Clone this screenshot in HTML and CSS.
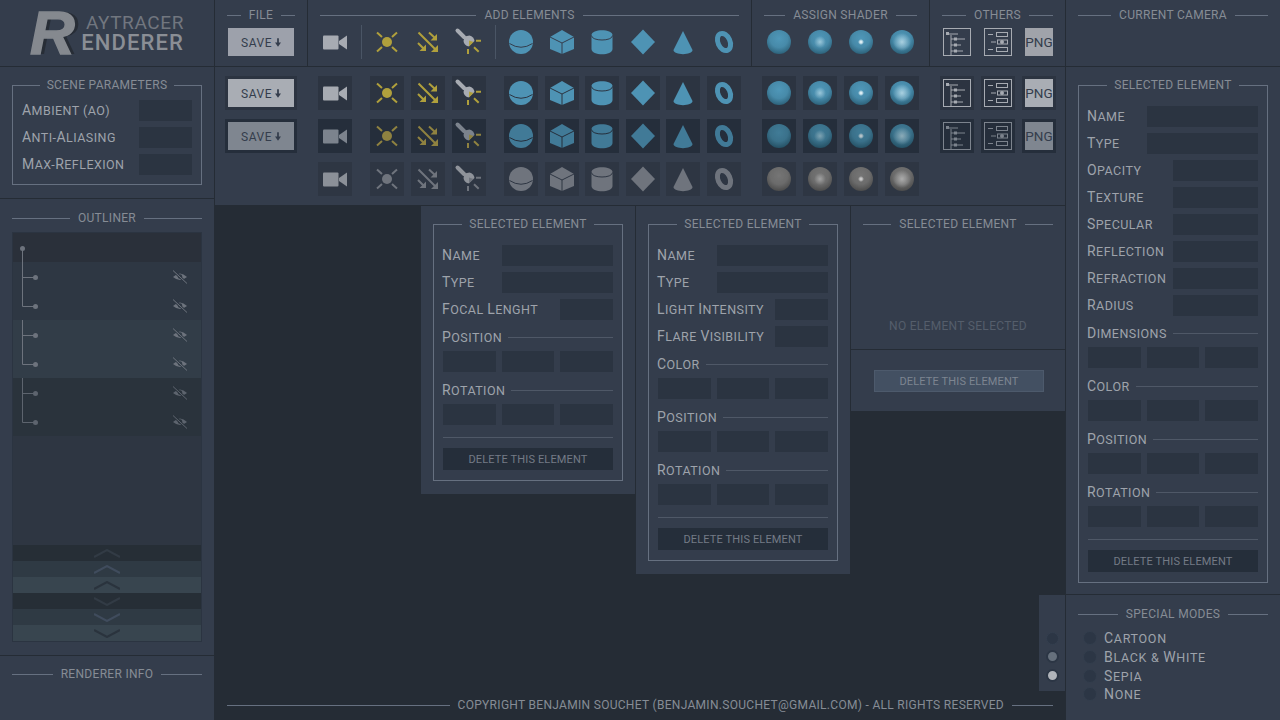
FILE: index.html
```html
<!DOCTYPE html>
<html lang="en">
<head>
    <meta charset="UTF-8">
    <meta name="viewport" content="width=device-width, initial-scale=1.0">
    <title>Raytracer Renderer</title>
    <link rel="stylesheet" href="styles.css">
</head>
<body>
    <!-- icon sheet, all drawn in the 34x34 box of a tool cell -->
    <svg class="sheet" width="0" height="0" aria-hidden="true">
        <symbol id="i-camera" viewBox="0 0 34 34">
            <rect x="5" y="10.5" width="15.5" height="14" rx="1" fill="currentColor"/>
            <polygon points="21,16 29,10.5 29,24.5 21,19" fill="currentColor"/>
        </symbol>
        <symbol id="i-sun" viewBox="0 0 34 34">
            <circle cx="17" cy="17" r="5" fill="currentColor"/>
            <path d="M7 7.5L12 12M27 7.5L22 12M7 26.5L12 22M27 26.5L22 22" stroke="currentColor" stroke-width="2" fill="none"/>
        </symbol>
        <symbol id="i-dir" viewBox="0 0 34 34">
            <path d="M7.5 7.5L25 25M18 7.5L24 13M7 18L13 24" stroke="currentColor" stroke-width="2" fill="none"/>
            <polygon points="27,20 27,27 20,27" fill="currentColor"/>
            <polygon points="26,9 26,15.500 19.500,15.500" fill="currentColor"/>
            <polygon points="15,19.500 15,26 8.500,26" fill="currentColor"/>
        </symbol>
        <symbol id="i-spot" viewBox="0 0 34 34">
            <path d="M5.500 5.500L12 12" stroke-width="4" stroke-linecap="round" class="spot-body-line" fill="none"/>
            <path d="M12.500 11.500L17.500 10.500A6.500 6.500 0 0 1 22.500 16L16.500 21.500A6.500 6.500 0 0 1 11.500 16Z" class="spot-body"/>
            <path d="M17 15.500L21.500 17L17 21.500Z" fill="currentColor"/>
            <path d="M24 15.700H29M16 24V29M22 22.300L26.700 26.700" stroke="currentColor" stroke-width="2" fill="none"/>
        </symbol>
        <symbol id="i-sphere" viewBox="0 0 34 34">
            <circle cx="17" cy="17" r="12" fill="currentColor"/>
            <path d="M5.500 18.500Q17 26 28.500 18.500" stroke="var(--cut)" stroke-width="1" fill="none"/>
        </symbol>
        <symbol id="i-cube" viewBox="0 0 34 34">
            <polygon points="17,5 29,12 29,24 17,29 5,24 5,12" fill="currentColor"/>
            <path d="M5 12L17 18L29 12M17 18V29" stroke="var(--cut)" stroke-width="1" fill="none"/>
        </symbol>
        <symbol id="i-cylinder" viewBox="0 0 34 34">
            <path d="M6.500 10C6.500 3.500 27.500 3.500 27.500 10V24C27.500 31 6.500 31 6.500 24Z" fill="currentColor"/>
            <path d="M6.500 10.500C6.500 16.500 27.500 16.500 27.500 10.500" stroke="var(--cut)" stroke-width="1" fill="none"/>
        </symbol>
        <symbol id="i-diamond" viewBox="0 0 34 34">
            <polygon points="17,4.500 29,17 17,29.500 5,17" fill="currentColor"/>
        </symbol>
        <symbol id="i-cone" viewBox="0 0 34 34">
            <path d="M17 6L26.500 25C26.500 30.500 7.500 30.500 7.500 25Z" fill="currentColor"/>
        </symbol>
        <symbol id="i-torus" viewBox="0 0 34 34">
            <ellipse cx="17" cy="17" rx="6" ry="9" transform="rotate(-24 17 17)" fill="none" stroke="currentColor" stroke-width="5"/>
        </symbol>
        <symbol id="i-tree" viewBox="0 0 34 34">
            <g fill="none" stroke="currentColor">
                <rect x="3.500" y="3.500" width="27" height="27"/>
                <path d="M8 9H18M11 10V30M11 14H25M11 20H21M11 26H23"/>
            </g>
            <g fill="currentColor">
                <rect x="6" y="7" width="3" height="3"/><rect x="14" y="12.500" width="3" height="3"/>
                <rect x="14" y="18.500" width="3" height="3"/><rect x="14" y="24.500" width="3" height="3"/>
            </g>
        </symbol>
        <symbol id="i-props" viewBox="0 0 34 34">
            <g fill="none" stroke="currentColor">
                <rect x="3.500" y="3.500" width="27" height="27"/>
                <path d="M7 9.500H12M10 17H15M7 24.500H12"/>
                <rect x="15.500" y="7.500" width="11" height="4"/>
                <rect x="15.500" y="22.500" width="11" height="4"/>
                <rect x="16.500" y="15" width="10" height="4"/>
            </g>
            <circle cx="21" cy="17" r="2" fill="currentColor"/>
        </symbol>
        <symbol id="i-arrow" viewBox="0 0 7 10">
            <path d="M2.500 0H4.500V5H7L3.500 10L0 5H2.500Z" fill="currentColor"/>
        </symbol>
        <symbol id="i-eye" viewBox="0 0 16 14">
            <path d="M1 7Q8 0 15 7Q8 13 1 7Z" fill="currentColor"/>
            <circle cx="8" cy="6.500" r="2.200" fill="var(--row)"/>
            <path d="M1.500 1L14.500 13" stroke="var(--row)" stroke-width="2.500"/>
            <path d="M1 .5L15 13.500" stroke="currentColor" stroke-width="1"/>
        </symbol>
        <symbol id="i-mid" viewBox="0 0 40 29">
            <path d="M10.500 0V29M10.500 15.500H23" stroke="currentColor" fill="none"/>
            <circle cx="23.500" cy="15.500" r="2.500" fill="currentColor"/>
        </symbol>
        <symbol id="i-end" viewBox="0 0 40 29">
            <path d="M10.500 0V15.500H23" stroke="currentColor" fill="none"/>
            <circle cx="23.500" cy="15.500" r="2.500" fill="currentColor"/>
        </symbol>
        <symbol id="i-up" viewBox="0 0 26 9">
            <path d="M0 8L13 1L26 8" stroke="currentColor" stroke-width="2" fill="none"/>
        </symbol>
        <symbol id="i-down" viewBox="0 0 26 9">
            <path d="M0 1L13 8L26 1" stroke="currentColor" stroke-width="2" fill="none"/>
        </symbol>
    </svg>

    <div class="app">
        <!-- left column -->
        <aside class="side side-left">
            <div class="logo">
                <span class="logo-r">R</span>
                <div class="logo-words">
                    <span class="logo-top">AYTRACER</span>
                    <span class="logo-bottom">ENDERER</span>
                </div>
            </div>

            <section class="scene">
                <fieldset class="group group-tight">
                    <legend>SCENE PARAMETERS</legend>
                    <div class="fields">
                        <label class="wide">AMBIENT (AO)</label><div class="input"></div>
                        <label class="wide">ANTI-<span class="cap">A</span>LIASING</label><div class="input"></div>
                        <label class="wide">MAX-<span class="cap">R</span>EFLEXION</label><div class="input"></div>
                    </div>
                </fieldset>
            </section>

            <section class="outliner">
                <div class="title">OUTLINER</div>
                <div class="tree">
                    <div class="tree-root"></div>
                    <div class="tree-group tone-a">
                        <div class="tree-row"><svg class="branch"><use href="#i-mid"/></svg><svg class="eye"><use href="#i-eye"/></svg></div>
                        <div class="tree-row"><svg class="branch"><use href="#i-end"/></svg><svg class="eye"><use href="#i-eye"/></svg></div>
                    </div>
                    <div class="tree-group tone-b">
                        <div class="tree-row"><svg class="branch"><use href="#i-mid"/></svg><svg class="eye"><use href="#i-eye"/></svg></div>
                        <div class="tree-row"><svg class="branch"><use href="#i-end"/></svg><svg class="eye"><use href="#i-eye"/></svg></div>
                    </div>
                    <div class="tree-group tone-c">
                        <div class="tree-row"><svg class="branch"><use href="#i-mid"/></svg><svg class="eye"><use href="#i-eye"/></svg></div>
                        <div class="tree-row"><svg class="branch"><use href="#i-end"/></svg><svg class="eye"><use href="#i-eye"/></svg></div>
                    </div>
                    <div class="tree-fill"></div>
                    <div class="scroll scroll-1"><svg><use href="#i-up"/></svg></div>
                    <div class="scroll scroll-2"><svg><use href="#i-up"/></svg></div>
                    <div class="scroll scroll-3"><svg><use href="#i-up"/></svg></div>
                    <div class="scroll scroll-1"><svg><use href="#i-down"/></svg></div>
                    <div class="scroll scroll-2"><svg><use href="#i-down"/></svg></div>
                    <div class="scroll scroll-3"><svg><use href="#i-down"/></svg></div>
                </div>
            </section>

            <section class="info">
                <div class="title">RENDERER INFO</div>
            </section>
        </aside>

        <!-- center column -->
        <main class="center">
            <header class="toolbar">
                <section class="tool-section sec-file">
                    <div class="title">FILE</div>
                    <div class="tool-row">
                        <div class="cell save"><span class="save-btn">SAVE <svg class="arrow"><use href="#i-arrow"/></svg></span></div>
                    </div>
                </section>
                <section class="tool-section sec-add">
                    <div class="title">ADD ELEMENTS</div>
                    <div class="tool-row">
                        <div class="cell cam"><svg><use href="#i-camera"/></svg></div>
                        <div class="grp lights divided">
                            <div class="cell yellow"><svg><use href="#i-sun"/></svg></div>
                            <div class="cell yellow"><svg><use href="#i-dir"/></svg></div>
                            <div class="cell yellow"><svg><use href="#i-spot"/></svg></div>
                        </div>
                        <div class="grp shapes divided">
                            <div class="cell blue"><svg><use href="#i-sphere"/></svg></div>
                            <div class="cell blue"><svg><use href="#i-cube"/></svg></div>
                            <div class="cell blue"><svg><use href="#i-cylinder"/></svg></div>
                            <div class="cell blue"><svg><use href="#i-diamond"/></svg></div>
                            <div class="cell blue"><svg><use href="#i-cone"/></svg></div>
                            <div class="cell blue"><svg><use href="#i-torus"/></svg></div>
                        </div>
                    </div>
                </section>
                <section class="tool-section sec-shader">
                    <div class="title">ASSIGN SHADER</div>
                    <div class="grp tool-row">
                        <div class="cell"><span class="ball matte"></span></div>
                        <div class="cell"><span class="ball soft"></span></div>
                        <div class="cell"><span class="ball tiny"></span></div>
                        <div class="cell"><span class="ball glow"></span></div>
                    </div>
                </section>
                <section class="tool-section sec-others">
                    <div class="title">OTHERS</div>
                    <div class="grp tool-row">
                        <div class="cell line"><svg><use href="#i-tree"/></svg></div>
                        <div class="cell line"><svg><use href="#i-props"/></svg></div>
                        <div class="cell"><span class="png">PNG</span></div>
                    </div>
                </section>
            </header>

            <section class="states">
                <div class="tool-row state-hover">
                    <div class="cell save"><span class="save-btn">SAVE <svg class="arrow"><use href="#i-arrow"/></svg></span></div>
                    <div class="cell cam gap-l"><svg><use href="#i-camera"/></svg></div>
                    <div class="grp lights gap-m">
                        <div class="cell yellow"><svg><use href="#i-sun"/></svg></div>
                        <div class="cell yellow"><svg><use href="#i-dir"/></svg></div>
                        <div class="cell yellow"><svg><use href="#i-spot"/></svg></div>
                    </div>
                    <div class="grp shapes gap-m">
                        <div class="cell blue"><svg><use href="#i-sphere"/></svg></div>
                        <div class="cell blue"><svg><use href="#i-cube"/></svg></div>
                        <div class="cell blue"><svg><use href="#i-cylinder"/></svg></div>
                        <div class="cell blue"><svg><use href="#i-diamond"/></svg></div>
                        <div class="cell blue"><svg><use href="#i-cone"/></svg></div>
                        <div class="cell blue"><svg><use href="#i-torus"/></svg></div>
                    </div>
                    <div class="grp gap-l">
                        <div class="cell"><span class="ball matte"></span></div>
                        <div class="cell"><span class="ball soft"></span></div>
                        <div class="cell"><span class="ball tiny"></span></div>
                        <div class="cell"><span class="ball glow"></span></div>
                    </div>
                    <div class="grp gap-l">
                        <div class="cell line"><svg><use href="#i-tree"/></svg></div>
                        <div class="cell line"><svg><use href="#i-props"/></svg></div>
                        <div class="cell"><span class="png">PNG</span></div>
                    </div>
                </div>
                <div class="tool-row state-press">
                    <div class="cell save"><span class="save-btn">SAVE <svg class="arrow"><use href="#i-arrow"/></svg></span></div>
                    <div class="cell cam gap-l"><svg><use href="#i-camera"/></svg></div>
                    <div class="grp lights gap-m">
                        <div class="cell yellow"><svg><use href="#i-sun"/></svg></div>
                        <div class="cell yellow"><svg><use href="#i-dir"/></svg></div>
                        <div class="cell yellow"><svg><use href="#i-spot"/></svg></div>
                    </div>
                    <div class="grp shapes gap-m">
                        <div class="cell blue"><svg><use href="#i-sphere"/></svg></div>
                        <div class="cell blue"><svg><use href="#i-cube"/></svg></div>
                        <div class="cell blue"><svg><use href="#i-cylinder"/></svg></div>
                        <div class="cell blue"><svg><use href="#i-diamond"/></svg></div>
                        <div class="cell blue"><svg><use href="#i-cone"/></svg></div>
                        <div class="cell blue"><svg><use href="#i-torus"/></svg></div>
                    </div>
                    <div class="grp gap-l">
                        <div class="cell"><span class="ball matte"></span></div>
                        <div class="cell"><span class="ball soft"></span></div>
                        <div class="cell"><span class="ball tiny"></span></div>
                        <div class="cell"><span class="ball glow"></span></div>
                    </div>
                    <div class="grp gap-l">
                        <div class="cell line"><svg><use href="#i-tree"/></svg></div>
                        <div class="cell line"><svg><use href="#i-props"/></svg></div>
                        <div class="cell"><span class="png">PNG</span></div>
                    </div>
                </div>
                <div class="tool-row state-off">
                    <div class="cell-empty"></div>
                    <div class="cell cam gap-l"><svg><use href="#i-camera"/></svg></div>
                    <div class="grp lights gap-m">
                        <div class="cell yellow"><svg><use href="#i-sun"/></svg></div>
                        <div class="cell yellow"><svg><use href="#i-dir"/></svg></div>
                        <div class="cell yellow"><svg><use href="#i-spot"/></svg></div>
                    </div>
                    <div class="grp shapes gap-m">
                        <div class="cell blue"><svg><use href="#i-sphere"/></svg></div>
                        <div class="cell blue"><svg><use href="#i-cube"/></svg></div>
                        <div class="cell blue"><svg><use href="#i-cylinder"/></svg></div>
                        <div class="cell blue"><svg><use href="#i-diamond"/></svg></div>
                        <div class="cell blue"><svg><use href="#i-cone"/></svg></div>
                        <div class="cell blue"><svg><use href="#i-torus"/></svg></div>
                    </div>
                    <div class="grp gap-l">
                        <div class="cell"><span class="ball matte"></span></div>
                        <div class="cell"><span class="ball soft"></span></div>
                        <div class="cell"><span class="ball tiny"></span></div>
                        <div class="cell"><span class="ball glow"></span></div>
                    </div>
                </div>
            </section>

            <section class="workspace">
                <div class="panels">
                    <div class="panel">
                        <fieldset class="group">
                            <legend>SELECTED ELEMENT</legend>
                            <div class="fields">
                                <label>NAME</label><div class="input span-2"></div>
                                <label>TYPE</label><div class="input span-2"></div>
                                <label class="wide">FOCAL <span class="cap">L</span>ENGHT</label><div class="input"></div>
                                <div class="sub first"><span><span class="cap">P</span>OSITION</span></div>
                                <div class="input"></div><div class="input"></div><div class="input"></div>
                                <div class="sub"><span><span class="cap">R</span>OTATION</span></div>
                                <div class="input"></div><div class="input"></div><div class="input"></div>
                            </div>
                            <hr class="rule">
                            <button class="delete">DELETE THIS ELEMENT</button>
                        </fieldset>
                    </div>

                    <div class="panel">
                        <fieldset class="group">
                            <legend>SELECTED ELEMENT</legend>
                            <div class="fields">
                                <label>NAME</label><div class="input span-2"></div>
                                <label>TYPE</label><div class="input span-2"></div>
                                <label class="wide">LIGHT <span class="cap">I</span>NTENSITY</label><div class="input"></div>
                                <label class="wide">FLARE <span class="cap">V</span>ISIBILITY</label><div class="input"></div>
                                <div class="sub first"><span><span class="cap">C</span>OLOR</span></div>
                                <div class="input"></div><div class="input"></div><div class="input"></div>
                                <div class="sub"><span><span class="cap">P</span>OSITION</span></div>
                                <div class="input"></div><div class="input"></div><div class="input"></div>
                                <div class="sub"><span><span class="cap">R</span>OTATION</span></div>
                                <div class="input"></div><div class="input"></div><div class="input"></div>
                            </div>
                            <hr class="rule">
                            <button class="delete">DELETE THIS ELEMENT</button>
                        </fieldset>
                    </div>

                    <div class="panel panel-empty">
                        <div class="empty-top">
                            <div class="title">SELECTED ELEMENT</div>
                            <p class="empty-msg">NO ELEMENT SELECTED</p>
                        </div>
                        <div class="empty-bottom">
                            <button class="delete delete-off">DELETE THIS ELEMENT</button>
                        </div>
                    </div>
                </div>

                <footer class="copyright">
                    <div class="title">COPYRIGHT BENJAMIN SOUCHET (BENJAMIN.SOUCHET@GMAIL.COM) - ALL RIGHTS RESERVED</div>
                </footer>

                <div class="dots">
                    <span class="dot"></span>
                    <span class="dot dot-mid"></span>
                    <span class="dot dot-on"></span>
                </div>
            </section>
        </main>

        <!-- right column -->
        <aside class="side side-right">
            <section class="camera">
                <div class="title">CURRENT CAMERA</div>
            </section>

            <section class="selected">
                <fieldset class="group">
                    <legend>SELECTED ELEMENT</legend>
                    <div class="fields">
                        <label>NAME</label><div class="input span-2"></div>
                        <label>TYPE</label><div class="input span-2"></div>
                        <label>OPACITY</label><div class="input span-2 input-short"></div>
                        <label>TEXTURE</label><div class="input span-2 input-short"></div>
                        <label>SPECULAR</label><div class="input span-2 input-short"></div>
                        <label>REFLECTION</label><div class="input span-2 input-short"></div>
                        <label>REFRACTION</label><div class="input span-2 input-short"></div>
                        <label>RADIUS</label><div class="input span-2 input-short"></div>
                        <div class="sub first"><span><span class="cap">D</span>IMENSIONS</span></div>
                        <div class="input"></div><div class="input"></div><div class="input"></div>
                        <div class="sub"><span><span class="cap">C</span>OLOR</span></div>
                        <div class="input"></div><div class="input"></div><div class="input"></div>
                        <div class="sub"><span><span class="cap">P</span>OSITION</span></div>
                        <div class="input"></div><div class="input"></div><div class="input"></div>
                        <div class="sub"><span><span class="cap">R</span>OTATION</span></div>
                        <div class="input"></div><div class="input"></div><div class="input"></div>
                    </div>
                    <hr class="rule">
                    <button class="delete">DELETE THIS ELEMENT</button>
                </fieldset>
            </section>

            <section class="modes">
                <div class="title">SPECIAL MODES</div>
                <ul class="mode-list">
                    <li><span class="radio"></span><span class="mode-name">CARTOON</span></li>
                    <li><span class="radio"></span><span class="mode-name">BLACK &amp; <span class="cap">W</span>HITE</span></li>
                    <li><span class="radio"></span><span class="mode-name">SEPIA</span></li>
                    <li><span class="radio"></span><span class="mode-name">NONE</span></li>
                </ul>
            </section>
        </aside>
    </div>
</body>
</html>
```

FILE: styles.css
```css
* {
    box-sizing: border-box;
}

body {
    margin: 0;
    background: #252c35;
    color: #8d929b;
    font-family: "Roboto", "Liberation Sans", sans-serif;
    font-size: 12px;
    overflow: hidden;
}

.sheet {
    position: absolute;
}

.spot-body {
    fill: var(--body);
}

.spot-body-line {
    stroke: var(--body);
}

.app {
    display: grid;
    grid-template-columns: 215px 850px 215px;
    width: 1280px;
    height: 720px;
}

.side {
    display: flex;
    flex-direction: column;
    background: #343d4c;
}

.side-left {
    border-right: 1px solid #252c35;
}

.side-right {
    border-left: 1px solid #252c35;
}

/* section titles with a line each side */
.title {
    display: flex;
    align-items: center;
    gap: 8px;
    height: 14px;
    line-height: 14px;
    letter-spacing: 0.3px;
    white-space: nowrap;
    color: #868c95;
}

.title::before,
.title::after {
    content: "";
    flex: 1;
    height: 1px;
    background: #667080;
}

/* logo */
.logo {
    display: flex;
    align-items: center;
    height: 67px;
    padding-left: 30px;
    border-bottom: 1px solid #252c35;
}

.logo-r {
    flex: none;
    width: 52px;
    font-family: "Liberation Sans", sans-serif;
    font-weight: bold;
    font-style: italic;
    font-size: 62px;
    line-height: 62px;
    color: #85898f;
    -webkit-text-stroke: 1.5px #85898f;
    text-shadow: 4px 0 #272d36;
}

.logo-words {
    display: flex;
    flex-direction: column;
    align-items: flex-end;
    width: 102px;
    line-height: 20px;
    color: #71767f;
}

.logo-top {
    font-size: 19px;
    letter-spacing: 0.6px;
}

.logo-bottom {
    font-size: 22px;
    font-weight: 500;
    letter-spacing: 1.1px;
    color: #8a8e95;
}

/* boxed groups */
.group {
    margin: 0;
    min-width: 0;
    padding: 14px 9px 10px;
    border: 1px solid #667080;
}

.group legend {
    margin: 0 auto;
    padding: 0 7px;
    height: 14px;
    line-height: 14px;
    letter-spacing: 0.3px;
    color: #868c95;
}

.group-tight {
    padding-top: 8px;
    padding-bottom: 9px;
}

.fields {
    display: grid;
    grid-template-columns: repeat(3, minmax(0, 1fr));
    column-gap: 6px;
    row-gap: 6px;
}

.fields label {
    height: 21px;
    line-height: 21px;
    font-size: 12.5px;
    letter-spacing: 0.45px;
    white-space: nowrap;
    color: #9ea3ab;
}

.panel .fields label,
.selected .fields label,
.sub {
    margin-left: -1px;
}

.fields label::first-letter,
.cap,
.mode-name::first-letter {
    font-size: 14px;
}

.fields .wide {
    grid-column: span 2;
}

.input {
    height: 21px;
    background: #2b3441;
}

.span-2 {
    grid-column: span 2;
}

.input-short {
    margin-left: 26px;
}

.sub {
    grid-column: 1 / -1;
    display: flex;
    align-items: center;
    gap: 6px;
    height: 20px;
    padding-top: 4px;
    font-size: 12.5px;
    letter-spacing: 0.45px;
    color: #9ea3ab;
}

.sub.first {
    height: 19px;
    padding-top: 3px;
}

.sub::after {
    content: "";
    flex: 1;
    height: 1px;
    background: #4f5867;
}

.rule {
    margin: 12px 0 10px;
    border: 0;
    height: 1px;
    background: #4f5867;
}

.delete {
    display: block;
    width: 170px;
    height: 22px;
    padding: 0;
    border: 0;
    background: #252e3a;
    color: #747b86;
    font-family: inherit;
    font-size: 11px;
    letter-spacing: 0.15px;
}

.delete-off {
    border: 1px solid #4d5a6c;
    background: #435062;
    color: #7d8591;
}

/* scene params */
.scene {
    height: 132px;
    padding: 11px 12px 0;
    border-bottom: 1px solid #252c35;
}

/* outliner */
.outliner {
    display: flex;
    flex-direction: column;
    height: 457px;
    padding: 12px 12px 13px;
    border-bottom: 1px solid #252c35;
}

.tree {
    flex: 1;
    display: flex;
    flex-direction: column;
    margin-top: 7px;
    background: #2e3642;
    border: 1px solid #2b3441;
}

.tree-root {
    position: relative;
    height: 29px;
    background: #2a303a;
}

.tree-root::before {
    content: "";
    position: absolute;
    left: 9px;
    top: 15px;
    bottom: 0;
    width: 1px;
    background: #6d737d;
}

.tree-root::after {
    content: "";
    position: absolute;
    left: 7px;
    top: 13px;
    width: 5px;
    height: 5px;
    border-radius: 50%;
    background: #6d737d;
}

.tree-group {
    --row: #2e3743;
    background: var(--row);
    color: #6d737d;
}

.tone-b {
    --row: #323d48;
}

.tone-c {
    --row: #2a333c;
    color: #5d646e;
}

.tree-row {
    display: flex;
    align-items: center;
    justify-content: space-between;
    height: 29px;
    padding-right: 13px;
}

.branch {
    width: 40px;
    height: 29px;
    margin-left: -1px;
}

.eye {
    width: 16px;
    height: 14px;
}

.tree-fill {
    flex: 1;
}

.scroll {
    display: flex;
    align-items: center;
    justify-content: center;
    height: 16px;
    flex: none;
}

.scroll svg {
    width: 26px;
    height: 9px;
}

.scroll-1 {
    background: #262e36;
    color: #323b45;
}

.scroll-2 {
    background: #2f3a44;
    color: #404c5d;
}

.scroll-3 {
    background: #38454f;
    color: #2a333d;
}

.info {
    padding: 11px 12px 0;
}

/* toolbar */
.center {
    display: flex;
    flex-direction: column;
}

.toolbar {
    display: flex;
    height: 67px;
    background: #343d4c;
    border-bottom: 1px solid #252c35;
}

.tool-section {
    padding: 8px 10px 0;
    border-right: 1px solid #252c35;
}

.tool-section .title {
    margin: 0 2px 3px;
}

.sec-file {
    width: 93px;
}

.sec-add {
    width: 444px;
}

.sec-shader {
    width: 178px;
}

.sec-others {
    width: 135px;
    border-right: 0;
}

.tool-row {
    display: flex;
    height: 34px;
}

.grp {
    display: flex;
    gap: 7px;
}

.shapes {
    gap: 6.6px;
}

.gap-l {
    margin-left: 21px;
}

.gap-m {
    margin-left: 18px;
}

.divided {
    margin-left: 9px;
    padding-left: 8px;
    border-left: 1px solid #4a5565;
}

.cell {
    --cut: #343d4c;
    --body: #a7abb2;
    display: flex;
    align-items: center;
    justify-content: center;
    width: 34px;
    height: 34px;
    flex: none;
}

.cell svg {
    width: 34px;
    height: 34px;
}

.cell-empty {
    width: 72px;
}

.cam {
    color: #a7abb2;
}

.yellow {
    color: #b0a03c;
}

.blue {
    color: #4e93b4;
}

.line {
    color: #a7abb2;
}

.save {
    width: 72px;
}

.save-btn {
    display: flex;
    align-items: center;
    justify-content: center;
    gap: 3px;
    width: 66px;
    height: 28px;
    padding-top: 1px;
    background: #9da1ab;
    color: #343d4c;
    font-size: 12px;
    letter-spacing: 0.5px;
}

.cell .arrow {
    width: 6px;
    height: 9px;
}

.png {
    display: flex;
    align-items: center;
    justify-content: center;
    width: 28px;
    height: 28px;
    background: #a0a3aa;
    color: #343d4c;
    font-size: 13.5px;
}

.ball {
    --base: radial-gradient(circle at 50% 36%, #4f97b8 0, #478aa9 45%, #2c6179 80%, #1f4658 100%);
    width: 24px;
    height: 24px;
    border-radius: 50%;
    background: var(--base);
}

.soft {
    background: radial-gradient(circle at 50% 50%, rgba(205, 232, 242, 0.6) 0, rgba(205, 232, 242, 0) 6px), var(--base);
}

.tiny {
    background: radial-gradient(circle at 50% 50%, #dcedf3 0, #dcedf3 1px, rgba(220, 237, 243, 0) 3px), var(--base);
}

.glow {
    background: radial-gradient(circle at 50% 50%, rgba(210, 235, 244, 0.7) 0, rgba(210, 235, 244, 0) 9px), var(--base);
}

/* the three button states */
.states {
    display: flex;
    flex-direction: column;
    gap: 9px;
    height: 139px;
    padding: 9px 10px 0;
    background: #343d4c;
    border-bottom: 1px solid #252c35;
}

.states .cell {
    background: #2c3441;
    --cut: #2c3441;
}

.state-hover .save-btn,
.state-hover .png {
    background: #a9adb4;
}

.state-press .cell {
    background: #252e3b;
    --cut: #252e3b;
    --body: #7c838d;
}

.state-press .save-btn,
.state-press .png {
    background: #7f8690;
}

.state-press .cam,
.state-press .line {
    color: #7c838d;
}

.state-press .yellow {
    color: #8f8240;
}

.state-press .blue {
    color: #417a97;
}

.state-press .ball {
    filter: brightness(0.82);
}

.state-off .cell {
    background: #2e3643;
    --cut: #2e3643;
    --body: #8f939a;
}

.state-off .cam {
    color: #8b9098;
}

.state-off .yellow,
.state-off .blue {
    color: #6f747d;
}

.state-off .ball {
    filter: grayscale(1) brightness(0.85);
}

/* floating panels */
.workspace {
    flex: 1;
    position: relative;
    display: flex;
    flex-direction: column;
    background: #252c35;
}

.panels {
    display: flex;
    justify-content: flex-end;
    align-items: flex-start;
}

.panel {
    width: 214px;
    margin-left: 1px;
    padding: 11px 12px 13px;
    background: #343d4c;
}

.panel-empty {
    padding: 0;
}

.empty-top {
    height: 144px;
    padding: 11px 12px 0;
    border-bottom: 1px solid #252c35;
}

.empty-msg {
    margin: 88px 0 0;
    text-align: center;
    line-height: 14px;
    letter-spacing: 0.3px;
    color: #555e6b;
}

.empty-bottom {
    height: 61px;
    padding: 20px 23px 0;
}

.copyright {
    margin-top: auto;
    padding: 0 12px 8px;
}

.copyright .title::after {
    flex: none;
    width: 41px;
}

.dots {
    position: absolute;
    right: 0;
    top: 389px;
    display: flex;
    flex-direction: column;
    align-items: center;
    justify-content: flex-end;
    gap: 5.5px;
    width: 26px;
    height: 96px;
    padding-bottom: 9.5px;
    background: #343d4c;
}

.dot {
    width: 13px;
    height: 13px;
    border-radius: 50%;
    background: #2c3645;
    border: 1px solid #343f4f;
}

.dot-mid {
    background: #66707c;
    border: 2px solid #2c3645;
}

.dot-on {
    background: #b0b4ba;
    border: 2px solid #2c3645;
}

/* right column */
.camera {
    height: 67px;
    padding: 8px 12px 0;
    border-bottom: 1px solid #252c35;
}

.selected {
    height: 528px;
    padding: 11px 12px 0;
    border-bottom: 1px solid #252c35;
}

.modes {
    padding: 12px 12px 0;
}

.mode-list {
    list-style: none;
    margin: 8px 0 0;
    padding: 0 0 0 5px;
}

.mode-list li {
    display: flex;
    align-items: center;
    gap: 7px;
    height: 18.7px;
}

.radio {
    width: 14px;
    height: 14px;
    border-radius: 50%;
    background: #2c3645;
    border: 1px solid #333e4d;
}

.mode-name {
    display: block;
    font-size: 12.5px;
    letter-spacing: 0.7px;
    color: #9ea3ab;
}
```
